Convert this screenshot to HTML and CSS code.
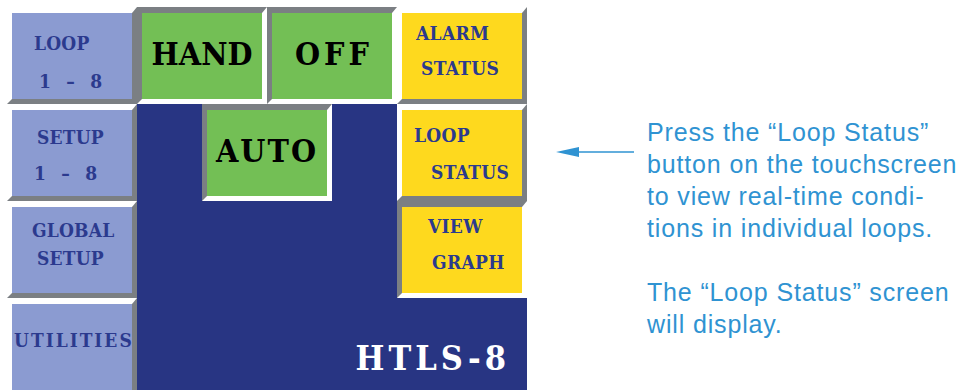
FILE: index.html
```html
<!DOCTYPE html>
<html lang="en">
<head>
  <meta charset="UTF-8" />
  <title>HTLS-8 Main Menu</title>
  <link rel="stylesheet" href="styles.css">
</head>
<body>
  <div class="page">
    <div class="screen">
      <div class="btn raised nav b-loop"><span>LOOP</span><span class="num">1 &ndash; 8</span></div>
      <div class="btn sunken mode b-hand">HAND</div>
      <div class="btn sunken mode b-off">OFF</div>
      <div class="btn raised side b-alarm"><span>ALARM</span><span class="in">STATUS</span></div>

      <div class="btn raised nav b-setup"><span>SETUP</span><span class="num">1 &ndash; 8</span></div>
      <div class="btn raised nav b-global"><span>GLOBAL</span><span class="in">SETUP</span></div>
      <div class="btn raised nav b-util"><span>UTILITIES</span></div>

      <div class="panel">
        <div class="btn sunken mode b-auto">AUTO</div>
        <div class="model">HTLS-8</div>
      </div>

      <div class="btn raised side b-status"><span>LOOP</span><span class="in">STATUS</span></div>
      <div class="btn sunken side b-graph"><span>VIEW</span><span class="in">GRAPH</span></div>
    </div>

    <div class="callout">
      <svg class="arrow" width="80" height="12" viewBox="0 0 80 12">
        <line x1="18" y1="6" x2="78" y2="6" stroke="#2f93d2" stroke-width="1.5"/>
        <polygon points="0,6 23,1 23,11" fill="#2f93d2"/>
      </svg>
      <p class="note">Press the “Loop Status”<br>button on the touchscreen<br>to view real-time condi-<br>tions in individual loops.<br><br>The “Loop Status” screen<br>will display.</p>
    </div>
  </div>
</body>
</html>
```

FILE: styles.css
```css
body {
  margin: 0;
  background: #fff;
  overflow: hidden;
}

.page {
  display: flex;
  align-items: flex-start;
}

/* the touchscreen */
.screen {
  display: grid;
  grid-template-columns: repeat(4, 130px);
  grid-template-rows: repeat(4, 97px);
  margin: 7px 0 0 7px;
  font-family: "DejaVu Serif", serif;
  font-weight: bold;
  font-stretch: condensed;
}

.btn {
  box-sizing: border-box;
  border-style: solid;
  border-width: 6px 5px 5px 5px;
  display: flex;
  flex-direction: column;
  line-height: 16px;
}

.raised {
  border-color: #fff #7b7f83 #7b7f83 #fff;
}

.sunken {
  border-color: #7b7f83 #fff #fff #7b7f83;
}

.nav {
  grid-column: 1;
  background: #8b9bd1;
  color: #2b3a8e;
  font-size: 19px;
  letter-spacing: 0.2px;
}

.side {
  grid-column: 4;
  background: #fed91e;
  color: #2b3a8e;
  font-size: 19px;
  letter-spacing: 0.3px;
}

.mode {
  background: #73bf55;
  color: #000;
  font-size: 32px;
  align-items: center;
  justify-content: center;
  padding-bottom: 4px;
}

.num {
  white-space: pre;
  word-spacing: 9px;
}

/* left menu */
.b-loop { grid-row: 1; padding: 22px 0 0 22px; gap: 22px; }
.b-loop .num { margin-left: 5px; }

.b-setup { grid-row: 2; padding: 19px 0 0 25px; gap: 20px; }
.b-setup .num { margin-left: -3px; }

.b-global { grid-row: 3; padding: 15px 0 0 20px; gap: 12px; }
.b-global .in { margin-left: 5px; }

.b-util { grid-row: 4; padding: 28px 0 0 2px; letter-spacing: 2px; }

/* hand / off / auto */
.b-hand { grid-column: 2; grid-row: 1; }
.b-off { grid-column: 3; grid-row: 1; letter-spacing: 4px; padding-left: 4px; }

.panel {
  grid-column: 2 / 5;
  grid-row: 2 / 5;
  background: #283583;
  display: grid;
  grid-template-columns: 65px 130px 1fr;
  grid-template-rows: 97px 1fr;
}

.b-auto {
  grid-column: 2;
  grid-row: 1;
  letter-spacing: 2px;
}

.model {
  grid-column: 1 / -1;
  grid-row: 2;
  justify-self: end;
  margin: 139px 17px 0 0;
  color: #fff;
  font-size: 34px;
  letter-spacing: 4px;
  line-height: 36px;
}

/* right column */
.b-alarm { grid-row: 1; padding: 12px 0 0 14px; gap: 19px; }
.b-alarm .in { margin-left: 5px; }

.b-status { grid-row: 2; padding: 17px 0 0 12px; gap: 21px; }
.b-status .in { margin-left: 17px; }

.b-graph { grid-row: 3; padding: 11px 0 0 26px; gap: 20px; }
.b-graph .in { margin-left: 4px; }

/* callout text */
.callout {
  display: flex;
  align-items: flex-start;
  margin: 116px 0 0 29px;
}

.arrow {
  margin-top: 30px;
}

.note {
  margin: 0 0 0 11px;
  font-family: "Liberation Sans", Arial, sans-serif;
  font-size: 25px;
  line-height: 32px;
  letter-spacing: 0.85px;
  color: #2f93d2;
  white-space: nowrap;
}
```
